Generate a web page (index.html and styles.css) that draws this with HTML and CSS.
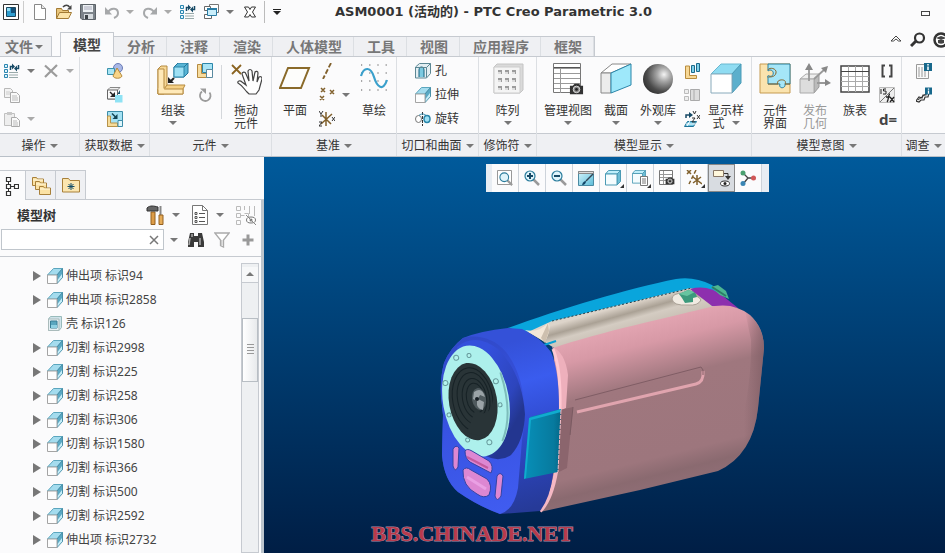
FILE: index.html
```html
<!DOCTYPE html>
<html lang="zh-CN">
<head>
<meta charset="utf-8">
<title>ASM0001 (活动的) - PTC Creo Parametric 3.0</title>
<link rel="stylesheet" href="styles.css">
</head>
<body>
<svg class="sprite" aria-hidden="true">
  <linearGradient id="cy" x1="0" y1="0" x2="1" y2="1"><stop offset="0" stop-color="#d4f4fc"/><stop offset="1" stop-color="#5cbcd8"/></linearGradient>
  <radialGradient id="ball" cx=".7" cy=".35" r=".75"><stop offset="0" stop-color="#f4f4f4"/><stop offset=".3" stop-color="#a8a8a8"/><stop offset=".75" stop-color="#4c4c4c"/><stop offset="1" stop-color="#333"/></radialGradient>

  <symbol id="app" viewBox="0 0 16 16"><path d="M.5.5h15v15H.5z" fill="#fff" stroke="#333"/><path d="M3.500 3.500h9v9h-9z" fill="#2f9ed0" stroke="#1c4760"/><path d="M8 4h4v5H8z" fill="#134f78"/><path d="M4 4h3v3H4z" fill="#8fdcf4"/></symbol>
  <symbol id="new" viewBox="0 0 16 16"><path d="M2.500.5h7l4 4v11h-11z" fill="#fff" stroke="#888"/><path d="M9.500.5v4h4" fill="#e8e8e8" stroke="#888"/></symbol>
  <symbol id="open" viewBox="0 0 16 16"><path d="M.5 14.500v-10h5l1 2h6v3" fill="#e9c67c" stroke="#a27a34"/><path d="M.5 14.500l3-6h12l-3 6z" fill="#fbe3a8" stroke="#a27a34"/><path d="M7 3c2-2.500 5-2.500 6.500 0" fill="none" stroke="#444" stroke-width="1.500"/><path d="M15.500 1v4.500H11z" fill="#444"/></symbol>
  <symbol id="save" viewBox="0 0 16 16"><path d="M.5.5h15v15H2l-1.500-1.500z" fill="#7c838a" stroke="#5c6268"/><path d="M3 1h10v7H3z" fill="#edf1f4"/><path d="M4 3h8M4 5h8" stroke="#aab"/><path d="M4 10h9v5H4z" fill="#d5dade"/><path d="M5 11h3v4H5z" fill="#3d4348"/></symbol>
  <symbol id="undo" viewBox="0 0 16 16"><path d="M4 8c3-5 10-4 10 1 0 2-1.500 4-4 5" fill="none" stroke="#a6a8aa" stroke-width="2"/><path d="M1 3v7.500h7z" fill="#a6a8aa"/></symbol>
  <symbol id="redo" viewBox="0 0 16 16"><path d="M12 8C9 3 2 4 2 9c0 2 1.500 4 4 5" fill="none" stroke="#a6a8aa" stroke-width="2"/><path d="M15 3v7.500H8z" fill="#a6a8aa"/></symbol>
  <symbol id="regen" viewBox="0 0 16 16"><path d="M.5 1.500h3v3h-3zM.5 6.500h3v3h-3zM.5 11.500h3v3h-3z" fill="#dff4fc" stroke="#2c86b0"/><path d="M5 9.500h9M5 12h9M5 14.500h9" stroke="#9aa"/><path d="M6.500 7V3.500H8M14.500 2v3.500H13" fill="none" stroke="#174a66" stroke-width="1.500"/><path d="M8 .5l3 3-3 3zM13 2.500l-3 3 3 3z" fill="#174a66"/></symbol>
  <symbol id="windows" viewBox="0 0 16 16"><path d="M5.500.5h9v8h-9z" fill="#fff" stroke="#777"/><path d="M.5 2.500h6v4h-6zM.5 10.500h7v4h-7z" fill="#fff" stroke="#666"/><path d="M3.500 4.500h9v7h-9z" fill="#c9eefb" stroke="#2a7ca4"/><path d="M3 5h10" stroke="#2a7ca4" stroke-width="2"/></symbol>
  <symbol id="closewin" viewBox="0 0 16 16"><path d="M2.500 3h4L8 5.500 9.500 3h4l-3 5 3 5h-4L8 10.500 6.500 13h-4l3-5z" fill="#fff" stroke="#333"/></symbol>
  <symbol id="xmark" viewBox="0 0 16 16"><path d="M2 2.500l12 11M14 2L2 14" stroke="#9b9b9b" stroke-width="2.200"/></symbol>
  <symbol id="copy" viewBox="0 0 16 16"><path d="M.5 1.500h6l2 2v7h-8z" fill="#f3f3f3" stroke="#b8b8b8"/><path d="M2 5h4M2 7h4" stroke="#ccc"/><path d="M6.500 5.500h6l3 3v7h-9z" fill="#fafafa" stroke="#aaa"/><path d="M8 9h5M8 11h6M8 13h6" stroke="#bbb"/></symbol>
  <symbol id="paste" viewBox="0 0 16 16"><path d="M.5 2.500h10v12H.5z" fill="#eee" stroke="#c0c0c0"/><path d="M3 1h5v3H3z" fill="#c8c8c8"/><path d="M7.500 6.500h5l3 3v6h-8z" fill="#fafafa" stroke="#aaa"/><path d="M9 10h4M9 12h5M9 14h5" stroke="#bbb"/></symbol>
  <symbol id="geom" viewBox="0 0 16 16"><circle cx="11" cy="5" r="4.500" fill="#aab8e6" stroke="#6a7cb6"/><path d="M.5 5.500h7v6h-7z" fill="#a8e4f4" stroke="#3a92ac"/><path d="M10 5l5 8c-1 3-8 3-9 0z" fill="#f8d488" stroke="#b48a3c"/></symbol>
  <symbol id="datacube" viewBox="0 0 16 16"><path d="M.5 3L3 .5h10L10.500 3v9H.5z" fill="#eee" stroke="#888"/><path d="M.5 3h10v9H.5z" fill="#fafafa" stroke="#666"/><path d="M8 8h7.500v7.500H8z" fill="#8fe2f4"/><path d="M10.500 7L13 3v4z" fill="#164e66"/><path d="M3 5l4 4" stroke="#222" stroke-width="1.500"/><path d="M8 5v5H3z" fill="#222"/></symbol>
  <symbol id="dataimp" viewBox="0 0 16 16"><path d="M.5.5h15v12h-5v3H.5z" fill="#a5e2f4" stroke="#3c8ca8"/><path d="M.5 5h3v7h7v3.500H.5z" fill="#f6dc9a" stroke="#b89248"/><path d="M5 2.500l4 4" stroke="#145" stroke-width="1.500"/><path d="M10.500 3v5h-5z" fill="#145"/><path d="M11 9.500h4.500v6H11z" fill="#dff6fc" stroke="#3c8ca8"/></symbol>
  <symbol id="assemble" viewBox="0 0 32 32"><path d="M1 6l3-3h6v20l-3 3v5H1z" fill="#f7d896" stroke="#b58a40"/><path d="M7 26l3-4h18l-2 4v5H1v-5z" fill="#f5d085" stroke="#b58a40"/><path d="M1 26V6h6v20h19v5H1z" fill="#ffe9b8" stroke="#b58a40"/><path d="M1.500 25.500h6v1h-6z" fill="#ffe9b8"/><path d="M17 4l4-4h10v10l-4 4H17z" fill="#58b4d4" stroke="#22759a"/><path d="M17 4h10v10H17z" fill="#9ee0f4" stroke="#2b86aa"/><path d="M27 4l4-4" stroke="#22759a"/><path d="M17 15l-3 3" stroke="#222" stroke-width="2"/><path d="M11 14v6h6z" fill="#222"/></symbol>
  <symbol id="create" viewBox="0 0 16 16"><path d="M.5 1.500h4v9h7v4H.5z" fill="#f7dc9e" stroke="#b58a40"/><path d="M5.500.5h10v9h-10z" fill="#a8e4f6" stroke="#2b86aa"/><path d="M9.500 6.500h6v8h-6z" fill="#fff" stroke="#5a8aa0"/></symbol>
  <symbol id="repeat" viewBox="0 0 16 16"><path d="M12.500 5.500A5.300 5.300 0 1 1 5 4.500" fill="none" stroke="#9b9b9b" stroke-width="1.800"/><path d="M3 1.500h6v5.500z" fill="#9b9b9b"/></symbol>
  <symbol id="drag" viewBox="0 0 32 32"><path d="M2 2l9 9M11 2L2 11" stroke="#8b6422" stroke-width="1.800"/><path d="M17 29c-3-3-4-6-9-9-1-2 2-3 4-1l4 3-4-11c0-2 3-3 4 0l3 7-1-10c1-2 3-2 4 0l1 10 2-9c1-1 3-1 3 1l-1 9 2-5c2-1 3 0 3 2l-3 11-3 4h-7z" fill="#fff" stroke="#444" stroke-width="1.200"/></symbol>
  <symbol id="plane" viewBox="0 0 32 32"><path d="M9 5h21l-8 20H1z" fill="#fdfdfb" stroke="#8a6a2a" stroke-width="2"/></symbol>
  <symbol id="axis" viewBox="0 0 16 16"><path d="M12 0L4 16" stroke="#80602c" stroke-width="1.800" stroke-dasharray="5 2"/></symbol>
  <symbol id="points" viewBox="0 0 16 16"><path d="M2 1l4 4M6 1L2 5M11 3l4 4M15 3l-4 4M1 9l4 4M5 9l-4 4" stroke="#80602c" stroke-width="1.500"/></symbol>
  <symbol id="csys" viewBox="0 0 16 16"><path d="M7 1v14M2 13L13 3M3 4l9 9" stroke="#80602c" stroke-width="1.500"/><path d="M0 0l2 3 2-3M2 3v3M0 11h3l-3 4h3M13 6l3 4M16 6l-3 4" stroke="#333" fill="none"/></symbol>
  <symbol id="sketch" viewBox="0 0 32 32"><path d="M3 2h28M3 10h28M3 18h28M3 27h28" stroke="#555" stroke-width="1.200" stroke-dasharray="1.200 7"/><path d="M3 13C6 3 13 4 16 14s9 15 13 3" fill="none" stroke="#3aa0cc" stroke-width="2.200"/></symbol>
  <symbol id="hole" viewBox="0 0 16 16"><path d="M.5 4l4-3.500h11v10l-4 4.500H.5z" fill="#e3eef2" stroke="#5c8794"/><path d="M4 14V7c0-4 5-4 5 0v7" fill="#7cc9e0" stroke="#16627e"/><path d="M11.500 4.500v10M.5 4.500h11l4-4" fill="none" stroke="#5c8794"/></symbol>
  <symbol id="extrude" viewBox="0 0 16 16"><path d="M.5 7l6-6.500h9L10 7z" fill="#a4dcee" stroke="#5ba6be"/><path d="M10 7l5.500-6.500v9L10 15.500z" fill="#5aa9c4" stroke="#4a90a8"/><path d="M10.500 12l4.500-6v3.500l-4.500 5z" fill="#c6edf8"/><path d="M.5 7h9.500v8.500H.5z" fill="#fdfdfd" stroke="#a4a4a4"/></symbol>
  <symbol id="revolve" viewBox="0 0 16 16"><ellipse cx="3.500" cy="8" rx="3" ry="3.500" fill="#fff" stroke="#777"/><ellipse cx="12" cy="8" rx="3" ry="3.500" fill="#9ee0f4" stroke="#2a86aa" stroke-width="1.500"/><path d="M7.500 1v14" stroke="#333" stroke-dasharray="3 1"/><path d="M4 4.500c2-2 5-2 7 0" fill="none" stroke="#2a86aa"/></symbol>
  <symbol id="pattern" viewBox="0 0 32 32"><path d="M2 4l3-3h26v26l-3 3H2z" fill="#dadada" stroke="#c4c4c4"/><path d="M2 4h26v26H2z" fill="#f4f4f4" stroke="#ccc"/><path d="M6 9h4M13 9h4M20 9h4M6 17h4M13 17h4M20 17h4M6 25h4M13 25h4M20 25h4" stroke="#9c9c9c" stroke-width="4"/><path d="M6 10h3M13 10h3M20 10h3M6 18h3M13 18h3M20 18h3M6 26h3M13 26h3M20 26h3" stroke="#ddd" stroke-width="2"/></symbol>
  <symbol id="camera" viewBox="0 0 16 12"><path d="M1 3h3l2-2h5l1 2h3v9H1z" fill="#333"/><circle cx="8" cy="7" r="3.500" fill="#888" stroke="#ddd"/><circle cx="8" cy="7" r="1.500" fill="#222"/></symbol>
  <symbol id="views" viewBox="0 0 32 32"><path d="M1.500.5h27v29h-27z" fill="#fff" stroke="#777"/><path d="M2 5.500h26M2 10.500h26M2 15.500h26M2 20.500h26M2 25.500h26M8.500 5v25" stroke="#999"/><path d="M2 4.500h26" stroke="#555"/><use href="#camera" x="17" y="19" width="15" height="13"/></symbol>
  <symbol id="section" viewBox="0 0 32 32"><path d="M1 10L12 1h19L11 10z" fill="#fff" stroke="#888"/><path d="M1 10h10v20H1z" fill="#ececec" stroke="#888"/><path d="M11 10L31 1v21l-20 8z" fill="#9ee8fa" stroke="#2a86aa"/></symbol>
  <symbol id="sphere" viewBox="0 0 32 32"><circle cx="16" cy="16" r="15" fill="url(#ball)"/></symbol>
  <symbol id="colours" viewBox="0 0 16 16"><path d="M1.500 3v12.500h11v-3h-7V3z" fill="#f7d896" stroke="#b88c3e"/><path d="M7.500 2.500h3v7h-3zM12.500.5h3v8h-3z" fill="#7ed0ea" stroke="#1c6a8c"/></symbol>
  <symbol id="persp" viewBox="0 0 16 16"><path d="M.5 2.500h4v4h-4zM.5 9.500h4v4h-4z" fill="#eee" stroke="#bbb"/><path d="M6.500 2.500h9v11h-9z" fill="#ddd" stroke="#aaa"/><path d="M10 3v10" stroke="#aaa"/></symbol>
  <symbol id="csdisp" viewBox="0 0 16 16"><path d="M.5 15.500l3-5h9l-3 5z" fill="#6cc4e2" stroke="#1e7296"/><path d="M2 13h10M6 10l-3 5" stroke="#fff"/><path d="M2 7V4h4" fill="none" stroke="#174a66" stroke-width="1.500"/><path d="M5 1l4 3-4 3z" fill="#174a66"/><path d="M9 0l1.500 3L12 0M13 4l3 4M16 4l-3 4M8 7h3l-3 4h3" stroke="#333" fill="none"/></symbol>
  <symbol id="shade" viewBox="0 0 32 32"><path d="M1 11L11 1h20L22 11z" fill="#8fdcf2" stroke="#6ab8d0"/><path d="M22 11l9-10v19l-9 10z" fill="#5cafcc" stroke="#4a9cb8"/><path d="M1 11h21v19H1z" fill="#fff" stroke="#8ab"/></symbol>
  <symbol id="puzzle" viewBox="0 0 32 32"><path d="M1 1h30v29H1z" fill="#fae3ae" stroke="#c59a50"/><path d="M9 1h22v20h-5c1 5-7 5-5 0H9v-6c-1-2 0-3 1-2 5 2 6-6 1-6-2 0-1 1-2 1z" fill="#a5e6f8" stroke="#2b7f9e"/><path d="M9 7c1-3 9-2 8 3-1 4-5 4-8 4M9 21h10c-3-5 10-6 7 0h5" fill="none" stroke="#866528"/></symbol>
  <symbol id="publish" viewBox="0 0 32 32"><path d="M1 16l6-5h13l-5 5z" fill="#eee" stroke="#aaa"/><path d="M15 16l5-5v13l-5 6z" fill="#bbb" stroke="#999"/><path d="M1 16h14v14H1z" fill="#ddd" stroke="#aaa"/><path d="M10 18V5M15 16L26 6M18 20h9" stroke="#999" stroke-width="1.800" fill="none"/><path d="M10 0l4 7H6zM29 3l-2 7-5-5zM32 20l-6 3v-7z" fill="#888"/></symbol>
  <symbol id="table" viewBox="0 0 32 32"><path d="M2 3h28v26H2z" fill="#fff" stroke="#444" stroke-width="1.500"/><path d="M2 13.500h28M2 18.500h28M2 23.500h28M9.500 3v26M16.500 3v26M23.500 3v26" stroke="#aaa"/><path d="M2 8.500h28" stroke="#444"/></symbol>
  <symbol id="brackets" viewBox="0 0 16 16"><path d="M6 2.500H3.500v11H6M10 2.500h2.500v11H10" fill="none" stroke="#444" stroke-width="2"/></symbol>
  <symbol id="fx" viewBox="0 0 16 16"><path d="M.5.5h15v15H.5z" fill="#eee" stroke="#bbb"/><path d="M15 1L1 15" stroke="#777"/><path d="M2 2v5M7 2H4.500v2H7v3H4" fill="none" stroke="#222"/><path d="M11 7c-2 0-1 6-3 8M7 10h4M11 10l4 5M15 10l-4 5" fill="none" stroke="#222" stroke-width="1.300"/></symbol>
  <symbol id="info" viewBox="0 0 8 8"><path d="M0 0h8v8H0z" fill="#17688c"/><path d="M4 1v1.500M4 3.500V7" stroke="#fff" stroke-width="1.500"/></symbol>
  <symbol id="report" viewBox="0 0 16 16"><path d="M.5 1.500h12v14H.5z" fill="#fafafa" stroke="#999"/><path d="M2 5h7M2 7h7M2 9h9M2 11h9M2 13h9" stroke="#999" stroke-dasharray="2 1"/><use href="#info" x="8" y="0" width="8" height="8"/></symbol>
  <symbol id="measure" viewBox="0 0 16 16"><path d="M0 14l3-4 3 1 1-3 3 0 0-3 3 1-1 4-3 0-1 3-3 0-2 2z" fill="#fff" stroke="#333" stroke-width="1.200"/><path d="M2 13l9-7" stroke="#333"/><use href="#info" x="9" y="0" width="7" height="8"/></symbol>

  <symbol id="tree" viewBox="0 0 16 20"><path d="M3.500 1.500h4v4h-4zM3.500 8.500h4v4h-4zM3.500 15.500h4v4h-4zM11.500 8.500h4v4h-4z" fill="#fff" stroke="#333" stroke-width="1.200"/><path d="M5.500 5.500v3M5.500 12.500v3M7.500 10.500h4" stroke="#333"/></symbol>
  <symbol id="folder" viewBox="0 0 12 10"><path d="M.5 9.500v-8h4l1 1.500h6v6.500z" fill="#fbe2a4" stroke="#a8803a"/><path d="M1 4h10" stroke="#fff8e0"/></symbol>
  <symbol id="folders" viewBox="0 0 20 20"><use href="#folder" x="1" y="1" width="12" height="10"/><use href="#folder" x="4" y="5" width="12" height="10"/><use href="#folder" x="8" y="10" width="12" height="10"/></symbol>
  <symbol id="favs" viewBox="0 0 18 16"><path d="M.5 15V1.500h6L8 3.500h9.500V15z" fill="#fbe6b0" stroke="#a8803a"/><path d="M9 6v7M5.500 9.500h7M6.500 7l5 5M11.500 7l-5 5" stroke="#124c68"/></symbol>
  <symbol id="tools" viewBox="0 0 18 20"><path d="M5 7h4v12.500H5z" fill="#dc9c48" stroke="#936020"/><path d="M1 6V3c3-3 7-2 11-1v4H1z" fill="#666" stroke="#333"/><path d="M14.500 1v9" stroke="#888" stroke-width="2"/><path d="M13 10h4v9.500h-4z" fill="#e6ac58" stroke="#936020"/></symbol>
  <symbol id="list" viewBox="0 0 16 20"><path d="M.5.5h10l5 5v14H.5z" fill="#fff" stroke="#777"/><path d="M10.500.5v5h5" fill="none" stroke="#777"/><path d="M7 8.500h6M7 12.500h6M7 16.500h6" stroke="#555"/><path d="M3 7.500h2v2H3zM3 11.500h2v2H3zM3 15.500h2v2H3z" fill="#fff" stroke="#555"/></symbol>
  <symbol id="hidetree" viewBox="0 0 20 20"><path d="M.5 1.500h4v4h-4zM.5 8.500h4v4h-4zM.5 15.500h4v4h-4zM8.500 8.500h4v4M8.500 1v4M13.500 1v8M18.500 1v10M4.500 10.500h4" fill="none" stroke="#bbb"/><ellipse cx="15" cy="15" rx="4.500" ry="3" fill="#fff" stroke="#777"/><circle cx="15" cy="15" r="1.500" fill="#777"/><path d="M10 10l10 10" stroke="#888"/></symbol>
  <symbol id="binoc" viewBox="0 0 16 16"><path d="M2 1h4v3h4V1h4l2 9v5h-6v-5H6v5H0v-5z" fill="#3a3a3a"/><path d="M2 6l-1 7M12 6v7M4 2v3" stroke="#aaa" stroke-width="1.500"/></symbol>
  <symbol id="funnel" viewBox="0 0 16 16"><path d="M.8 1h14.400L9.500 8v7l-3-1.500V8z" fill="#fff" stroke="#aaa" stroke-width="1.300"/><path d="M7 8v5h1.500V8z" fill="#ccc"/></symbol>
  <symbol id="plus" viewBox="0 0 16 16"><path d="M8 2.500v11M2.500 8h11" stroke="#999" stroke-width="3"/></symbol>
  <symbol id="shell" viewBox="0 0 16 16"><path d="M1.500 3l2-2.500h11v11l-2.500 3H1.500z" fill="#cfe3ea" stroke="#9bb"/><path d="M1.500 3h10.500v11.500H1.500z" fill="#e6f0f4" stroke="#abb"/><path d="M3.500 5h6.500v7H3.500z" fill="#5aa6bf" stroke="#387c94"/><path d="M4 9h6v3H4z" fill="#8fd0e2"/></symbol>

  <symbol id="mag" viewBox="0 0 16 16"><path d="M9 9l6 6" stroke="#9a9a9a" stroke-width="2.500"/><circle cx="6" cy="6" r="5" fill="#dff4fb" stroke="#2a7c9c" stroke-width="1.200"/></symbol>
  <symbol id="fit" viewBox="0 0 16 16"><path d="M.5.5h14v14H.5z" fill="#fff" stroke="#999"/><use href="#mag" x="2" y="2" width="14" height="14"/></symbol>
  <symbol id="zin" viewBox="0 0 16 16"><use href="#mag" width="16" height="16"/><path d="M6 3v6M3 6h6" stroke="#174a66" stroke-width="2"/></symbol>
  <symbol id="zout" viewBox="0 0 16 16"><use href="#mag" width="16" height="16"/><path d="M3 6h6" stroke="#174a66" stroke-width="2"/></symbol>
  <symbol id="repaint" viewBox="0 0 16 16"><path d="M.5 1.500h15v14H.5z" fill="url(#cy)" stroke="#4a8aa2"/><path d="M.5 1.500h15v2H.5z" fill="#ddd" stroke="#888"/><path d="M15 4L8 11" stroke="#345" stroke-width="1.500"/><path d="M4 15c1-3 2-4 4-4 0 2-1 4-4 4z" fill="#146"/></symbol>
  <symbol id="cube" viewBox="0 0 16 16"><path d="M.5 4l3-3.500h12L12 4z" fill="#bdeefa" stroke="#4a9ab4"/><path d="M12 4l3.500-3.500v11L12 15z" fill="#6cbcd4" stroke="#4a9ab4"/><path d="M.5 4H12v11H.5z" fill="#f4fcfe" stroke="#4a9ab4"/></symbol>
  <symbol id="cubelist" viewBox="0 0 16 16"><use href="#cube" width="14" height="14"/><path d="M8.500 6.500h7v9h-7z" fill="#fff" stroke="#777"/><path d="M10 9h4M10 11h4M10 13h4" stroke="#777"/></symbol>
  <symbol id="vcam" viewBox="0 0 16 16"><path d="M.5.5h13v14H.5z" fill="#fff" stroke="#777"/><path d="M1 4.500h12M1 7.500h12M1 10.500h12M4.500 1v13" stroke="#999"/><use href="#camera" x="6" y="6" width="10" height="9"/></symbol>
  <symbol id="datums" viewBox="0 0 16 16"><path d="M1 0l4 4M5 0L1 4" stroke="#80602c" stroke-width="1.500"/><path d="M10 0L3 14" stroke="#80602c" stroke-width="1.500" stroke-dasharray="4 2"/><path d="M11 5v10M7 13l8-6M7 7l9 7" stroke="#80602c" stroke-width="1.500"/></symbol>
  <symbol id="annot" viewBox="0 0 20 18"><path d="M1.500 1.500h10v6h-10z" fill="#fff8dc" stroke="#876"/><path d="M12 4.500h4v4" fill="none" stroke="#333"/><path d="M13 7h6l-3 4z" fill="#333"/><ellipse cx="13" cy="14.500" rx="4.500" ry="2.500" fill="#fff" stroke="#333"/><circle cx="13" cy="14.500" r="1.500" fill="#222"/></symbol>
  <symbol id="spin" viewBox="0 0 16 16"><path d="M3 3l5 5M3 14l5-6 6 0" stroke="#444" stroke-width="1.300" fill="none"/><circle cx="3" cy="3" r="2.500" fill="#4aa070"/><circle cx="13.500" cy="8" r="2.500" fill="#d05858"/><circle cx="3" cy="13.500" r="2.500" fill="#3a86b4"/></symbol>
</svg>

<header class="titlebar">
  <div class="quick">
    <button class="brand" aria-label="系统"><svg class="i16"><use href="#app"/></svg></button>
    <button aria-label="新建"><svg class="i16"><use href="#new"/></svg></button>
    <button aria-label="打开"><svg class="i16"><use href="#open"/></svg></button>
    <button aria-label="保存"><svg class="i16"><use href="#save"/></svg></button>
    <button class="split" aria-label="撤消"><svg class="i16"><use href="#undo"/></svg><i class="arrow pale"></i></button>
    <button class="split" aria-label="重做"><svg class="i16"><use href="#redo"/></svg><i class="arrow pale"></i></button>
    <button aria-label="重新生成"><svg class="i16"><use href="#regen"/></svg></button>
    <button class="split" aria-label="窗口"><svg class="i16"><use href="#windows"/></svg><i class="arrow"></i></button>
    <button class="closewin" aria-label="关闭窗口"><svg class="i16"><use href="#closewin"/></svg></button>
    <button class="customise" aria-label="自定义工具栏"><i class="arrow dark"></i></button>
  </div>
  <h1 class="title">ASM0001 (活动的) - PTC Creo Parametric 3.0</h1>
  <button class="minimise" aria-label="最小化"></button>
</header>

<nav class="tabs">
  <button class="tab file">文件<i class="arrow"></i></button>
  <button class="tab active">模型</button>
  <button class="tab">分析</button>
  <button class="tab">注释</button>
  <button class="tab">渲染</button>
  <button class="tab">人体模型</button>
  <button class="tab">工具</button>
  <button class="tab">视图</button>
  <button class="tab">应用程序</button>
  <button class="tab">框架</button>
  <div class="help">
    <button aria-label="最小化功能区"><svg width="14" height="12" viewBox="0 0 14 12"><path d="M2 7l5-5 5 5h-2.500L7 5 4.500 7z" fill="#fff" stroke="#444"/></svg></button>
    <button aria-label="搜索"><svg width="16" height="16" viewBox="0 0 16 16"><circle cx="9.500" cy="6" r="4.500" fill="none" stroke="#333" stroke-width="2.200"/><path d="M6 9l-5 5" stroke="#333" stroke-width="3"/></svg></button>
    <button aria-label="帮助"><svg width="16" height="16" viewBox="0 0 16 16"><circle cx="8" cy="8" r="6.500" fill="#fff" stroke="#333" stroke-width="2.500"/><path d="M3 6l5-2 5 2-5 2zM5 8v3c2 1 4 1 6 0V8" fill="#444"/></svg></button>
  </div>
</nav>

<section class="ribbon">
  <div class="group">
    <div class="body ops">
      <div class="stack">
        <button class="row" aria-label="重新生成"><svg class="i16"><use href="#regen"/></svg><i class="arrow"></i></button>
        <button class="row" aria-label="复制"><svg class="i16"><use href="#copy"/></svg></button>
        <button class="row" aria-label="粘贴"><svg class="i16"><use href="#paste"/></svg><i class="arrow pale"></i></button>
      </div>
      <div class="stack">
        <button class="row" aria-label="删除"><svg class="i16"><use href="#xmark"/></svg><i class="arrow pale"></i></button>
      </div>
    </div>
    <button class="foot">操作<i class="arrow"></i></button>
  </div>
  <div class="group">
    <div class="body centred">
      <div class="stack">
        <button class="row" aria-label="用户定义特征"><svg class="i16"><use href="#geom"/></svg></button>
        <button class="row" aria-label="复制几何"><svg class="i16"><use href="#datacube"/></svg></button>
        <button class="row" aria-label="收缩包络"><svg class="i16"><use href="#dataimp"/></svg></button>
      </div>
    </div>
    <button class="foot">获取数据<i class="arrow"></i></button>
  </div>
  <div class="group">
    <div class="body">
      <button class="big"><svg class="i32"><use href="#assemble"/></svg><span>组装</span><i class="arrow"></i></button>
      <div class="stack">
        <button class="row" aria-label="创建"><svg class="i16"><use href="#create"/></svg></button>
        <button class="row" aria-label="重复"><svg class="i16"><use href="#repeat"/></svg></button>
      </div>
      <i class="divider"></i>
      <button class="big"><svg class="i32"><use href="#drag"/></svg><span>拖动<br>元件</span></button>
    </div>
    <button class="foot">元件<i class="arrow"></i></button>
  </div>
  <div class="group">
    <div class="body">
      <button class="big"><svg class="i32"><use href="#plane"/></svg><span>平面</span></button>
      <div class="stack">
        <button class="row" aria-label="轴"><svg class="i16"><use href="#axis"/></svg></button>
        <button class="row" aria-label="点"><svg class="i16"><use href="#points"/></svg><i class="arrow"></i></button>
        <button class="row" aria-label="坐标系"><svg class="i16"><use href="#csys"/></svg></button>
      </div>
      <button class="big"><svg class="i32"><use href="#sketch"/></svg><span>草绘</span></button>
    </div>
    <button class="foot">基准<i class="arrow"></i></button>
  </div>
  <div class="group">
    <div class="body cuts">
      <div class="stack">
        <button class="row tight"><svg class="i16"><use href="#hole"/></svg>孔</button>
        <button class="row tight"><svg class="i16"><use href="#extrude"/></svg>拉伸</button>
        <button class="row tight"><svg class="i16"><use href="#revolve"/></svg>旋转</button>
      </div>
    </div>
    <button class="foot">切口和曲面<i class="arrow"></i></button>
  </div>
  <div class="group">
    <div class="body centred">
      <button class="big"><svg class="i32"><use href="#pattern"/></svg><span>阵列</span><i class="arrow"></i></button>
    </div>
    <button class="foot">修饰符<i class="arrow"></i></button>
  </div>
  <div class="group">
    <div class="body">
      <button class="big"><svg class="i32"><use href="#views"/></svg><span>管理视图</span><i class="arrow"></i></button>
      <button class="big"><svg class="i32"><use href="#section"/></svg><span>截面</span><i class="arrow"></i></button>
      <button class="big"><svg class="i32"><use href="#sphere"/></svg><span>外观库</span><i class="arrow"></i></button>
      <div class="stack">
        <button class="row" aria-label="编辑位置"><svg class="i16"><use href="#colours"/></svg></button>
        <button class="row" aria-label="切换状况"><svg class="i16"><use href="#persp"/></svg></button>
        <button class="row" aria-label="方向"><svg class="i16"><use href="#csdisp"/></svg></button>
      </div>
      <button class="big"><svg class="i32"><use href="#shade"/></svg><span>显示样<br>式 <i class="arrow inline"></i></span></button>
    </div>
    <button class="foot">模型显示<i class="arrow"></i></button>
  </div>
  <div class="group">
    <div class="body">
      <button class="big"><svg class="i32"><use href="#puzzle"/></svg><span>元件<br>界面</span></button>
      <button class="big off"><svg class="i32"><use href="#publish"/></svg><span>发布<br>几何</span></button>
      <button class="big"><svg class="i32"><use href="#table"/></svg><span>族表</span></button>
      <div class="stack">
        <button class="row" aria-label="参数"><svg class="i16"><use href="#brackets"/></svg></button>
        <button class="row" aria-label="切换符号"><svg class="i16"><use href="#fx"/></svg></button>
        <button class="row relation">d=</button>
      </div>
    </div>
    <button class="foot">模型意图<i class="arrow"></i></button>
  </div>
  <div class="group">
    <div class="body centred">
      <div class="stack">
        <button class="row" aria-label="材料清单"><svg class="i16"><use href="#report"/></svg></button>
        <button class="row" aria-label="参考查看器"><svg class="i16"><use href="#measure"/></svg></button>
      </div>
    </div>
    <button class="foot">调查<i class="arrow"></i></button>
  </div>
</section>

<main class="work">
  <aside class="side">
    <div class="sidetabs">
      <button class="sidetab current" aria-label="模型树"><svg width="16" height="20"><use href="#tree"/></svg></button>
      <button class="sidetab" aria-label="文件夹浏览器"><svg width="20" height="20"><use href="#folders"/></svg></button>
      <button class="sidetab" aria-label="收藏夹"><svg width="18" height="16"><use href="#favs"/></svg></button>
    </div>
    <div class="panel">
      <div class="head">
        <h2>模型树</h2>
        <button aria-label="设置"><svg width="18" height="20"><use href="#tools"/></svg><i class="arrow"></i></button>
        <button aria-label="显示"><svg width="16" height="20"><use href="#list"/></svg><i class="arrow"></i></button>
        <button aria-label="隐藏"><svg width="20" height="20"><use href="#hidetree"/></svg></button>
      </div>
      <div class="find">
        <div class="box"><input type="text" aria-label="搜索模型树"><button aria-label="清除"><svg width="10" height="10" viewBox="0 0 10 10"><path d="M1 1l8 8M9 1L1 9" stroke="#777" stroke-width="1.500"/></svg></button></div>
        <button aria-label="搜索选项"><i class="arrow"></i></button>
        <button aria-label="查找"><svg class="i16"><use href="#binoc"/></svg></button>
        <button aria-label="过滤"><svg class="i16"><use href="#funnel"/></svg></button>
        <button aria-label="添加"><svg class="i16"><use href="#plus"/></svg></button>
      </div>
      <div class="treewrap">
        <ul class="nodes">
          <li class="node"><i class="twist"></i><svg class="i16"><use href="#extrude"/></svg>伸出项 标识94</li>
          <li class="node"><i class="twist"></i><svg class="i16"><use href="#extrude"/></svg>伸出项 标识2858</li>
          <li class="node"><i class="twist leaf"></i><svg class="i16"><use href="#shell"/></svg>壳 标识126</li>
          <li class="node"><i class="twist"></i><svg class="i16"><use href="#extrude"/></svg>切割 标识2998</li>
          <li class="node"><i class="twist"></i><svg class="i16"><use href="#extrude"/></svg>切割 标识225</li>
          <li class="node"><i class="twist"></i><svg class="i16"><use href="#extrude"/></svg>切割 标识258</li>
          <li class="node"><i class="twist"></i><svg class="i16"><use href="#extrude"/></svg>切割 标识306</li>
          <li class="node"><i class="twist"></i><svg class="i16"><use href="#extrude"/></svg>切割 标识1580</li>
          <li class="node"><i class="twist"></i><svg class="i16"><use href="#extrude"/></svg>切割 标识366</li>
          <li class="node"><i class="twist"></i><svg class="i16"><use href="#extrude"/></svg>切割 标识500</li>
          <li class="node"><i class="twist"></i><svg class="i16"><use href="#extrude"/></svg>切割 标识2592</li>
          <li class="node"><i class="twist"></i><svg class="i16"><use href="#extrude"/></svg>伸出项 标识2732</li>
        </ul>
        <div class="scroll">
          <button class="up" aria-label="向上滚动"><i></i></button>
          <div class="thumb"><i></i></div>
        </div>
      </div>
    </div>
  </aside>

  <section class="view">
    <svg class="scene" viewBox="264 157 681 396" preserveAspectRatio="xMidYMid slice">
      <defs>
        <linearGradient id="pink" gradientUnits="userSpaceOnUse" x1="640" y1="324" x2="678" y2="478">
          <stop offset="0" stop-color="#e2a4b1"/><stop offset=".13" stop-color="#d799a6"/><stop offset=".37" stop-color="#9f777e"/><stop offset=".84" stop-color="#9d767d"/><stop offset=".95" stop-color="#8a6a70"/><stop offset="1" stop-color="#8d6c73"/>
        </linearGradient>
        <linearGradient id="edge" gradientUnits="userSpaceOnUse" x1="744" y1="0" x2="764" y2="0"><stop offset="0" stop-color="#7c5b62" stop-opacity="0"/><stop offset="1" stop-color="#7c5b62" stop-opacity=".7"/></linearGradient>
        <linearGradient id="blue" gradientUnits="userSpaceOnUse" x1="500" y1="345" x2="545" y2="505"><stop offset="0" stop-color="#3451d8"/><stop offset=".25" stop-color="#3a5cee"/><stop offset=".55" stop-color="#2f49cc"/><stop offset="1" stop-color="#263a98"/></linearGradient>
        <linearGradient id="face" gradientUnits="userSpaceOnUse" x1="450" y1="340" x2="500" y2="512"><stop offset="0" stop-color="#3049c8"/><stop offset=".5" stop-color="#3853e2"/><stop offset="1" stop-color="#405cf0"/></linearGradient>
        <linearGradient id="bowl" gradientUnits="userSpaceOnUse" x1="475" y1="370" x2="528" y2="400"><stop offset="0" stop-color="#3450dc"/><stop offset=".7" stop-color="#2d45bd"/><stop offset="1" stop-color="#233690"/></linearGradient>
        <linearGradient id="beige" gradientUnits="userSpaceOnUse" x1="610" y1="309" x2="617" y2="334"><stop offset="0" stop-color="#ddd4ca"/><stop offset=".35" stop-color="#aaa195"/><stop offset=".6" stop-color="#d4ccc2"/><stop offset="1" stop-color="#c9c0b5"/></linearGradient>
        <linearGradient id="door" x1="0" y1="0" x2="1" y2="0"><stop offset="0" stop-color="#078fb8"/><stop offset=".8" stop-color="#077a9e"/><stop offset="1" stop-color="#046888"/></linearGradient>
      </defs>
      <path d="M508 328C560 309 630 288 676 279Q694 276 712 285L722 294 690 300 553 338z" fill="#09a5dc"/>
      <path d="M528 332L552 321 690 288 703 291 722 306 556 349z" fill="url(#beige)"/>
      <path d="M552 321L692 288" stroke="#26414c" stroke-dasharray="2 2"/>
      <path d="M672 299Q672 293 684 293 699 295 701 300 698 306 688 305 673 306 672 299z" fill="#f1ebe2" stroke="#aaa196"/>
      <path d="M679 294l9-4 7 2 2 5-4 1v4l-8 1-3-5z" fill="#3c9a7c"/><path d="M679 294l9-4 7 2-8 4z" fill="#67c4a0"/>
      <path d="M690 289Q708 284 723 296L738 308 712 306z" fill="#8d2fae"/>
      <path d="M711 287l7-2 8 6 3 8-9-4z" fill="#4cb591"/><path d="M712 287l14 9" stroke="#2c7e68" stroke-width="2"/>
      <path d="M553 348C600 332 670 317 715 306Q735 303 750 315 764 328 764 348L758 408Q753 455 718 471L640 490 540 512 550 490 558 410z" fill="url(#pink)"/>
      <path d="M745 311Q764 325 764 348L758 408Q753 455 718 471C742 445 752 385 751 340z" fill="url(#edge)"/>
      <path d="M544 345l12-4" stroke="#07a0d4" stroke-width="2"/>
      <path d="M552 347Q565 352 568 375L566 408 559 411Q562 370 552 347z" fill="#eeb0bc"/>
      <path d="M553 349Q561 368 560 410" fill="none" stroke="#ffc8d2" stroke-width="3"/>
      <path d="M556 472Q551 500 540 511" fill="none" stroke="#f5b8c4" stroke-width="4"/>
      <path d="M560 410l13-3-6 61-10 5z" fill="#8b656d"/><path d="M573 407l-3 28" stroke="#7b5b62"/>
      <path d="M577 412L696 384Q704 382 703 371" fill="none" stroke="#e0a4ae" stroke-width="3"/>
      <path d="M575 400l126-33q3 2 2 8" fill="none" stroke="#805d65"/>
      <path d="M508 328Q480 331 463 338 450 348 444 363 440 378 441 396L443 415 442 455Q444 480 458 492 478 506 500 514L540 511Q550 498 553 475L559 408Q559 370 551 352 540 337 522 329z" fill="url(#blue)"/>
      <path d="M463 338Q450 348 444 363 440 378 441 396L443 415 442 455Q444 480 458 492 478 506 500 514 514 510 518 488L522 440C528 405 523 374 506 352 494 337 475 334 463 338z" fill="url(#face)"/>
      <path d="M457 347Q475 332 498 349 522 373 525 414 524 441 511 455 499 463 486 456z" fill="url(#bowl)"/>
      <path d="M525 330q14 3 23-7 3 2 0 12l-3 7z" fill="#f3e7d8"/><path d="M541 338l7-15 1 8-4 12z" fill="#cdbfae"/>
      <g transform="rotate(-10 476 401)">
        <ellipse cx="476" cy="401" rx="33" ry="56" fill="#adf0ec"/>
        <path d="M505 377Q511 420 495 445" fill="none" stroke="#7dbdbb" stroke-width="2"/>
        <ellipse cx="473" cy="401" rx="24" ry="39" fill="#293437"/>
        <g fill="none" stroke="#172226"><ellipse cx="473" cy="399" rx="20" ry="32"/><ellipse cx="474" cy="398" rx="16" ry="26"/><ellipse cx="475" cy="398" rx="12" ry="20"/><ellipse cx="476" cy="398" rx="9" ry="15"/></g>
        <path d="M474 409q12 14 20-8 0 25-11 33-13 4-21-4z" fill="#293437"/>
      </g>
      <g transform="rotate(-10 476 401)" fill="#b4f4ee" stroke="#679a9c"><circle cx="464" cy="355" r="2.500"/><circle cx="477" cy="355" r="2"/><circle cx="499" cy="385" r="2.500"/><circle cx="499" cy="409" r="2"/><circle cx="482" cy="444" r="2.500"/><circle cx="461" cy="438" r="2"/><circle cx="447" cy="410" r="2"/><circle cx="449" cy="378" r="2.500"/></g>
      <ellipse cx="479" cy="399" rx="7" ry="11" fill="#4f5a5e" transform="rotate(-10 479 399)"/><path d="M474 392q8-6 11 5l-5-2-2 4 6 3-1 8q-7-1-6-9l-4-2z" fill="#9aa3a7"/><circle cx="477" cy="399" r="2" fill="#182126"/>
      <g fill="#dd87d2" stroke="#3344a4"><path d="M453 449q3-5 6-1l-1 19q-3 6-5-1z"/><path d="M465 451q2-3 7 0l17 10q5 5 2 12l-21-11q-5-4-5-11z"/><path d="M463 470q3-4 8 0l16 9q6 6 2 16-5 4-12-1-15-8-14-24z"/><path d="M497 476q3-5 6 0l-2 20q-4 7-6 0z"/></g>
      <path d="M467 457l21 11" stroke="#c45a9f" stroke-width="2"/><path d="M467 477l19 12" stroke="#eaa0e4" stroke-width="3"/>
      <path d="M530 417L561 409 558 472 524 479z" fill="url(#door)"/><path d="M529 418l32-9v3l-30 8-5 58-2 1z" fill="#10accf"/>
      <path d="M561 410l-3 62-4 4" fill="none" stroke="#f4bdc6" stroke-dasharray="4 1"/>
      <text class="mark" x="472" y="541" text-anchor="middle">BBS.CHINADE.NET</text>
    </svg>
    <div class="viewbar">
      <button aria-label="重新调整"><svg class="i16"><use href="#fit"/></svg></button>
      <button aria-label="放大"><svg class="i16"><use href="#zin"/></svg></button>
      <button aria-label="缩小"><svg class="i16"><use href="#zout"/></svg></button>
      <button aria-label="重画"><svg class="i16"><use href="#repaint"/></svg></button>
      <button class="more" aria-label="显示样式"><svg class="i16"><use href="#cube"/></svg></button>
      <button class="more" aria-label="已保存方向"><svg class="i16"><use href="#cubelist"/></svg></button>
      <button aria-label="视图管理器"><svg class="i16"><use href="#vcam"/></svg></button>
      <button class="more" aria-label="基准显示"><svg class="i16"><use href="#datums"/></svg></button>
      <button class="pressed" aria-label="注释显示"><svg width="20" height="18"><use href="#annot"/></svg></button>
      <button aria-label="旋转中心"><svg class="i16"><use href="#spin"/></svg></button>
    </div>
  </section>
</main>
</body>
</html>
```
FILE: styles.css
```css
* { box-sizing: border-box; }

body {
  margin: 0;
  height: 100vh;
  display: flex;
  flex-direction: column;
  overflow: hidden;
  background: #fbfbfc;
  color: #333;
  font: 12px/16px "Noto Sans", "Noto Sans CJK SC", sans-serif;
}

button {
  display: inline-flex;
  align-items: center;
  justify-content: center;
  padding: 0;
  border: 0;
  background: none;
  color: inherit;
  font: inherit;
}

svg { flex: none; }
.sprite { position: absolute; width: 0; height: 0; }
.i16 { width: 16px; height: 16px; }
.i32 { width: 32px; height: 32px; }

.arrow {
  flex: none;
  border: 4px solid transparent;
  border-top-color: #777;
  border-bottom: 0;
}
.arrow.pale { border-top-color: #aaa; }
.arrow.dark { border-top-color: #222; }
.arrow.inline { display: inline-block; margin: 0 0 3px 4px; }

/* Title bar */
.titlebar { display: flex; align-items: center; height: 24px; flex: none; }
.quick { display: flex; align-items: center; gap: 8px; }
.brand { padding: 3px 4px 3px 3px; border-right: 1px solid #ccc; }
.split { gap: 6px; }
.closewin { padding-right: 6px; border-right: 1px solid #bbb; height: 22px; }
.customise { border-top: 1px solid #222; padding-top: 1px; }
.title {
  flex: 1;
  margin: 0 0 0 54px;
  font: bold 13px/24px "DejaVu Sans", "Noto Sans CJK SC", sans-serif;
  white-space: nowrap;
}
.minimise { width: 9px; height: 5px; margin: 2px 15px 0 0; border: 1px solid #444; }

/* Ribbon tabs */
.tabs {
  display: flex;
  align-items: flex-end;
  height: 33px;
  flex: none;
  border-bottom: 1px solid #c6cad0;
}
.tab {
  height: 20px;
  padding: 0 12px 0 13px;
  border: solid #c6cad0;
  border-width: 1px 0 0;
  background: #eff0f3;
  color: #777;
  font-size: 14px;
  font-weight: bold;
  white-space: nowrap;
  box-shadow: inset -1px 0 #dcdfe3;
}
.tab:nth-last-child(2) { border-right-width: 1px; }
.tab.file { padding: 0 8px 0 5px; gap: 2px; margin-right: 8px; border-right-width: 1px; box-shadow: none; }
.tab.active {
  height: 25px;
  margin-bottom: -1px;
  padding: 0 12px;
  border-width: 1px 1px 0;
  background: #fbfbfc;
  color: #444;
  box-shadow: none;
}
.help { display: flex; align-items: center; gap: 7px; margin: 0 -4px 8px auto; }

/* Ribbon groups */
.ribbon {
  display: grid;
  grid-template-columns: 80px 70px 122px 125px 82px 58px 215px 150px minmax(43px, 1fr);
  height: 100px;
  flex: none;
  border-bottom: 1px solid #b9c0c8;
}
.group { display: flex; flex-direction: column; border-right: 1px solid #dcdfe3; min-width: 0; }
.group:last-child { border-right: 0; }
.body { display: flex; flex: 1; gap: 8px; padding: 2px 0 0 7px; }
.body.ops { padding-left: 4px; }
.body.cuts { padding-left: 18px; }
.body.centred { justify-content: center; padding-left: 0; }
.stack { display: flex; flex-direction: column; }
.row { height: 24px; justify-content: flex-start; gap: 7px; }
.row.tight { gap: 4px; white-space: nowrap; }
.relation { font-size: 15px; font-weight: bold; color: #444; }
.big {
  flex-direction: column;
  justify-content: flex-start;
  align-items: center;
  padding-top: 4px;
  line-height: 13px;
  white-space: nowrap;
}
.big span { margin-top: 9px; }
.big > .arrow { margin-top: 4px; }
.big.off { color: #999; }
.divider { width: 1px; height: 54px; margin-top: 6px; background: #d4d7db; }
.foot {
  height: 23px;
  gap: 4px;
  padding-top: 1px;
  border-top: 1px solid #c6cad0;
  background: #eff0f3;
  white-space: nowrap;
}

/* Navigator */
.work { display: flex; flex: 1; min-height: 0; }
.side { display: flex; flex-direction: column; width: 264px; flex: none; padding-top: 13px; }
.sidetabs { display: flex; height: 30px; flex: none; }
.sidetab { width: 30px; border: 1px solid #c6cad0; border-left: 0; background: #eff0f3; }
.sidetab.current { width: 26px; background: #fbfbfc; border-bottom: 0; padding-right: 4px; }
.sidetabs::after { content: ""; flex: 1; border-bottom: 1px solid #c6cad0; }
.panel { display: flex; flex-direction: column; flex: 1; min-height: 0; border-right: 3px solid #bcc5cd; }
.head { display: flex; align-items: center; height: 29px; padding: 0 5px 0 17px; gap: 12px; flex: none; }
.head h2 { flex: 1; margin: 0; font-size: 13px; line-height: 20px; }
.head button { gap: 8px; }
.find { display: flex; align-items: center; gap: 10px; padding: 0 5px 6px 1px; border-bottom: 1px solid #c6cad0; flex: none; }
.box { display: flex; flex: 1; min-width: 0; height: 21px; margin-right: -4px; border: 1px solid #c0c6cc; background: #fff; padding-right: 4px; }
.box input { flex: 1; min-width: 0; border: 0; padding: 0 4px; background: none; font: inherit; outline: 0; }
.treewrap { display: flex; flex: 1; min-height: 0; padding: 6px 2px 0 0; }
.nodes { flex: 1; margin: 0; padding: 1px 0 0 33px; list-style: none; overflow: hidden; color: #444; }
.node { display: flex; align-items: center; gap: 3px; height: 24px; white-space: nowrap; }
.twist { width: 11px; height: 10px; border: solid transparent; border-width: 5px 0 5px 8px; border-left-color: #777; }
.twist.leaf { border-color: transparent; }
.scroll { width: 18px; border: 1px solid #c6cad0; background: #eef0f2; }
.up { width: 16px; height: 16px; border-bottom: 1px solid #c6cad0; background: #f7f8f9; }
.up i { border: 4px solid transparent; border-bottom-color: #777; border-top: 0; }
.thumb {
  display: grid;
  place-items: center;
  height: 64px;
  margin-top: 35px;
  border: 1px solid #b8bec4;
  background: linear-gradient(90deg, #fff, #e8eaec);
}
.thumb i { width: 7px; height: 11px; background: repeating-linear-gradient(#999 0 1px, transparent 1px 3px); }

/* Graphics window */
.view { position: relative; flex: 1; min-width: 0; background: linear-gradient(#005a9b, #003c70 50%, #001e45); }
.scene { display: block; width: 100%; height: 100%; }
.mark {
  font: bold 22px "Liberation Serif", serif;
  fill: #b83a4c;
  stroke: #a48ea4;
  stroke-width: 1px;
  paint-order: stroke;
}
.viewbar {
  position: absolute;
  top: 7px;
  left: 222px;
  display: flex;
  padding: 0 7px 0 6px;
  background: #e8edf3;
}
.viewbar button { position: relative; width: 27px; height: 28px; background: #fbfbfc; border-right: 1px solid #cdd3da; }
.viewbar .pressed { background: #d8dce1; border: 1px solid #888; }
.more::after {
  content: "";
  position: absolute;
  right: 2px;
  bottom: 4px;
  border: 2px solid #333;
  border-top-color: transparent;
  border-left-color: transparent;
}
```
